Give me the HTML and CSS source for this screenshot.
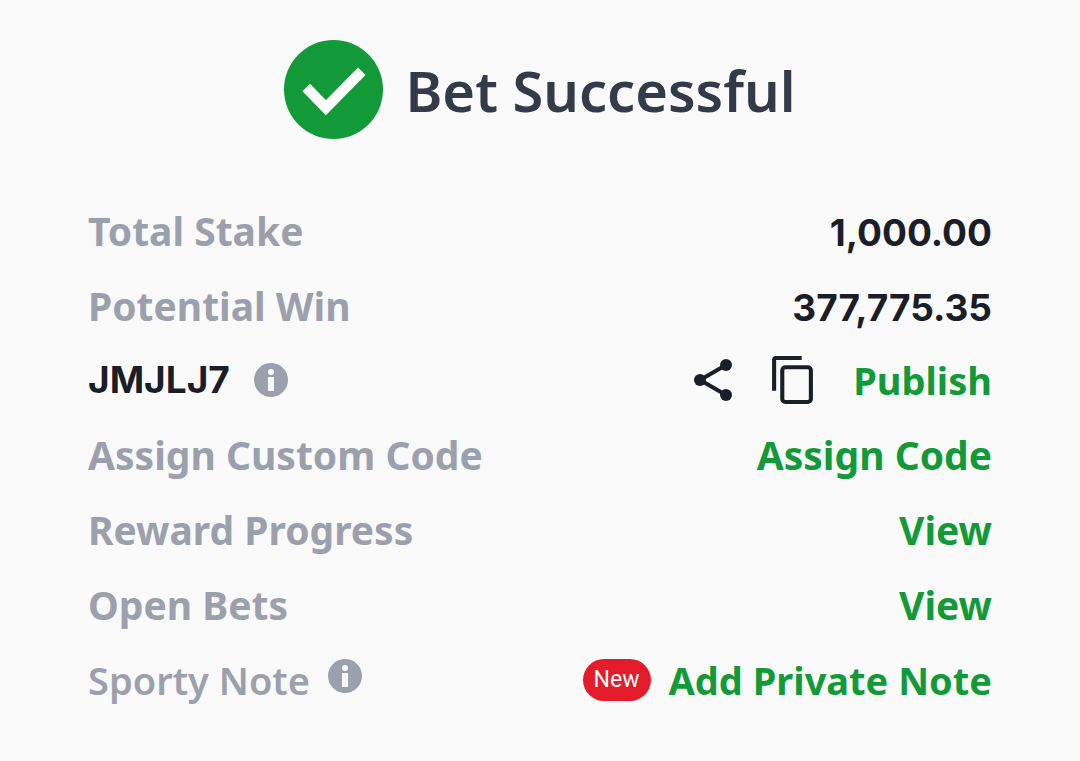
FILE: index.html
```html
<!DOCTYPE html>
<html lang="en">
<head>
<meta charset="utf-8">
<meta name="viewport" content="width=device-width, initial-scale=1">
<title>Bet Successful</title>
<link rel="stylesheet" href="styles.css">
</head>
<body>
<main class="receipt">
  <header class="heading">
    <svg class="check" viewBox="0 0 98 98" aria-hidden="true"><circle cx="49" cy="49" r="49" fill="#129a38"/><path d="m22 47 19.500 20L77 31" fill="none" stroke="#fff" stroke-width="10.500"/></svg>
    <h1 class="title">Bet Successful</h1>
  </header>
  <dl class="rows">
    <div class="row amount"><dt class="label">Total Stake</dt><dd class="value number">1,000.00</dd></div>
    <div class="row amount"><dt class="label">Potential Win</dt><dd class="value number">377,775.35</dd></div>
    <div class="row">
      <dt class="label code">JMJLJ7
        <button class="icon-button" aria-label="About booking code"><svg class="info" viewBox="0 0 34 34"><circle cx="17" cy="17" r="17" fill="#9ca0ad"/><circle cx="17" cy="9" r="3" fill="#fafafa"/><path d="M14 14h6v14h-6z" fill="#fafafa"/></svg></button>
      </dt>
      <dd class="value actions">
        <button class="icon-button" aria-label="Share"><svg class="share" viewBox="0 0 38 42"><path d="M32 6 6 21l26 15" fill="none" stroke="#1b1e29" stroke-width="4"/><circle cx="32" cy="6" r="6" fill="#1b1e29"/><circle cx="6" cy="21" r="6" fill="#1b1e29"/><circle cx="32" cy="36" r="6" fill="#1b1e29"/></svg></button>
        <button class="icon-button" aria-label="Copy"><svg class="copy" viewBox="0 0 40 47"><path d="M2 34V4q0-2 2-2h25" fill="none" stroke="#1b1e29" stroke-width="4"/><rect x="10" y="11" width="28" height="34" rx="3" fill="none" stroke="#1b1e29" stroke-width="4"/></svg></button>
        <button class="link">Publish</button>
      </dd>
    </div>
    <div class="row"><dt class="label">Assign Custom Code</dt><dd class="value"><button class="link">Assign Code</button></dd></div>
    <div class="row"><dt class="label">Reward Progress</dt><dd class="value"><a class="link" href="#rewards">View</a></dd></div>
    <div class="row"><dt class="label">Open Bets</dt><dd class="value"><a class="link" href="#bets">View</a></dd></div>
    <div class="row">
      <dt class="label note">Sporty Note
        <button class="icon-button" aria-label="About Sporty Note"><svg class="info" viewBox="0 0 34 34"><circle cx="17" cy="17" r="17" fill="#9ca0ad"/><circle cx="17" cy="9" r="3" fill="#fafafa"/><path d="M14 14h6v14h-6z" fill="#fafafa"/></svg></button>
      </dt>
      <dd class="value private"><span class="badge">New</span><button class="link">Add Private Note</button></dd>
    </div>
  </dl>
</main>
</body>
</html>
```
FILE: styles.css
```css
* { box-sizing: border-box; }
body { margin: 0; background: #fafafa; font-family: "Noto Sans", sans-serif; color: #1b1e29; }
.receipt { padding: 40px 88px; }
.heading { display: flex; align-items: center; justify-content: center; gap: 22px; }
.check { width: 99px; height: 99px; }
.title { margin: 0; font-size: 56px; line-height: 64px; font-weight: 600; color: #353a49; }
.rows { margin: 53px 0 0; }
.row { display: flex; align-items: center; justify-content: space-between; height: 75px; font-size: 39px; line-height: 48px; font-weight: 700; }
.row.amount { align-items: baseline; padding-top: 15px; }
.label, .value { display: flex; align-items: center; margin: 0; white-space: nowrap; }
.label { color: #9ca0ad; gap: 20px; }
.label.code { color: #1b1e29; gap: 24px; font-family: Inter, sans-serif; font-size: 37px; }
.label.note { gap: 18px; font-size: 38px; font-weight: 600; }
.value.number { font-family: Inter, sans-serif; font-size: 37px; }
.icon-button, .link { display: flex; padding: 0; border: 0; background: none; font: inherit; cursor: pointer; }
.link { color: #129a38; text-decoration: none; }
.info { width: 34px; height: 34px; }
.share { width: 38px; height: 42px; }
.copy { width: 41px; height: 48px; }
.value.actions { gap: 40px; font-size: 38px; }
.note .icon-button { padding-bottom: 8px; }
.value.private { gap: 18px; font-size: 38px; }
.badge { padding: 0 11px; border-radius: 21px; background: #e41b2b; color: #fff; font-family: Roboto, sans-serif; font-size: 23px; line-height: 42px; font-weight: 400; }
```
